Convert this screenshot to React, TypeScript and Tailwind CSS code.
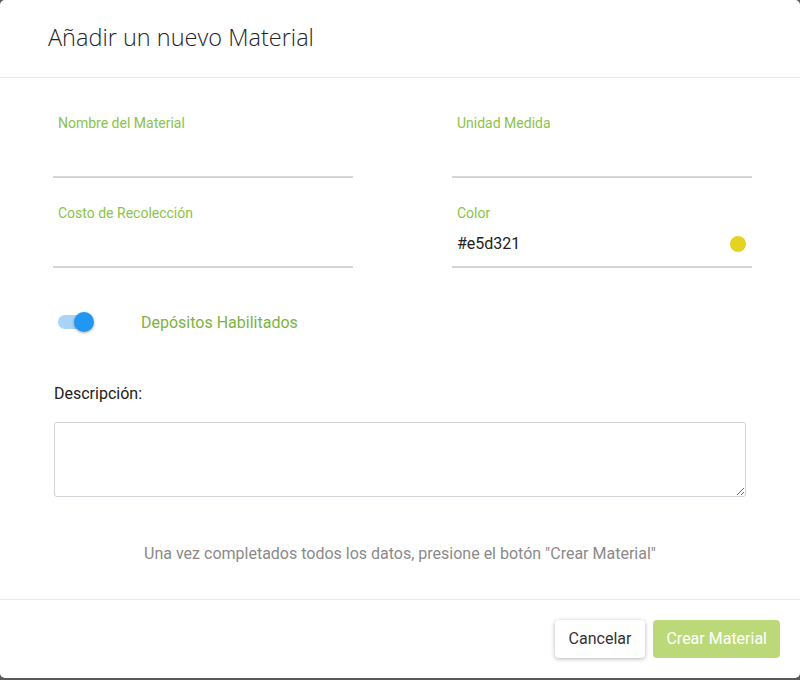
import React from "react";

const labelCls = "text-[14px] leading-none text-[#8bc34a] pl-[5px]";

const Field = ({ label, value, dot }: { label: string; value?: string; dot?: string }) => {
  return (
    <div className="flex flex-col">
      <span className={labelCls}>{label}</span>
      <div className="flex items-center justify-between h-[38px] mt-[8px] pb-[6px] pl-[5px] pr-[6px]">
        <span className="text-[16px] text-[#212121]">{value}</span>
        {dot && <span className="w-4 h-4 rounded-full" style={{ backgroundColor: dot }} />}
      </div>
      <div className="h-px bg-[#d6d6d6]" />
      <div className="h-px bg-[#c9e68e]" />
    </div>
  );
};

const App = () => {
  return (
    <div className="w-[800px] h-[680px] bg-[#5a5a5a] font-['Roboto',sans-serif]">
      <div className="w-[800px] h-[678px] bg-white rounded-[5px] flex flex-col overflow-hidden">
        <div className="h-[78px] border-b border-[#e9ecef] flex items-center pl-[48px] pb-[2px]">
          <h1 className="text-[23.5px] text-[#212529] font-['Open_Sans',sans-serif] font-light">
            Añadir un nuevo Material
          </h1>
        </div>

        <div className="flex-1 flex flex-col pt-[38px]">
          <div className="grid grid-cols-[300px_300px] gap-x-[99px] gap-y-[28px] pl-[53px]">
            <Field label="Nombre del Material" />
            <Field label="Unidad Medida" />
            <Field label="Costo de Recolección" />
            <Field label="Color" value="#e5d321" dot="#e5d321" />
          </div>

          <div className="flex items-center pl-[58px] mt-[40px]">
            <div className="relative w-[36px] h-[20px] flex items-center">
              <div className="w-[32px] h-[14px] rounded-full bg-[#a9d3f7]" />
              <div className="absolute left-[16px] top-0 w-[20px] h-[20px] rounded-full bg-[#2196f3] shadow-[0_1px_3px_rgba(0,0,0,0.35)]" />
            </div>
            <span className="ml-[47px] text-[16px] text-[#7cb342] mt-[3px]">Depósitos Habilitados</span>
          </div>

          <div className="pl-[54px] mt-[47px] text-[16px] text-[#212121]">Descripción:</div>

          <div className="pl-[54px] pr-[54px] mt-[16px]">
            <textarea className="block w-full h-[75px] border border-[#cfd2d6] rounded-[3px] resize-y outline-none" />
          </div>

          <div className="mt-[45px] text-center text-[16px] text-[#8a8a8a]">
            Una vez completados todos los datos, presione el botón "Crear Material"
          </div>
        </div>

        <div className="h-[79px] border-t border-[#e9ecef] flex items-center justify-end pr-[20px] gap-[8px]">
          <button className="h-[38px] px-[14px] rounded-[4px] bg-white text-[16px] text-[#333] shadow-[0_1px_4px_rgba(0,0,0,0.3)]">
            Cancelar
          </button>
          <button className="h-[38px] px-[13px] rounded-[4px] bg-[#bcd97a] text-[16px] text-white">
            Crear Material
          </button>
        </div>
      </div>
    </div>
  );
};

export default App;
